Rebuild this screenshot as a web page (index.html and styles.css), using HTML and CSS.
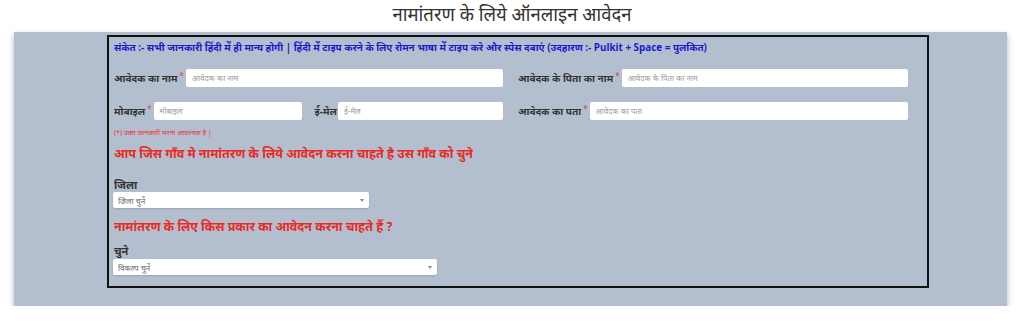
FILE: index.html
```html
<!DOCTYPE html>
<html lang="hi">
<head>
<meta charset="utf-8">
<link rel="stylesheet" href="styles.css">
</head>
<body>
<h1 class="title">नामांतरण के लिये ऑनलाइन आवेदन</h1>
<div class="panel">
  <div class="box">
    <p class="hint">संकेत :- सभी जानकारी हिंदी में ही मान्य होगी | हिंदी में टाइप करने के लिए रोमन भाषा में टाइप करे और स्पेस दबाएं (उदहारण :- <span class="latin">Pulkit + Space = </span>पुलकित)</p>
    <div class="grid">
      <div class="field">
        <span class="label">आवेदक का नाम</span><span class="star">*</span>
        <span class="input w-fill">आवेदक का नाम</span>
      </div>
      <div class="field">
        <span class="label">आवेदक के पिता का नाम</span><span class="star">*</span>
        <span class="input w-fill">आवेदक के पिता का नाम</span>
      </div>
      <div class="field">
        <span class="label">मोबाइल</span><span class="star">*</span>
        <span class="input w-mobile">मोबाइल</span>
        <span class="label email-label">ई-मेल</span>
        <span class="input w-fill">ई-मेल</span>
      </div>
      <div class="field">
        <span class="label">आवेदक का पता</span><span class="star">*</span>
        <span class="input w-fill">आवेदक का पता</span>
      </div>
    </div>
    <p class="note">(*) उक्त जानकारी भरना आवश्यक है |</p>
    <h2 class="heading">आप जिस गाँव मे नामांतरण के लिये आवेदन करना चाहते है उस गाँव को चुने</h2>
    <div class="sel-label">जिला</div>
    <div class="select sel-district"><span>जिला चुनें</span><span class="caret"></span></div>
    <h2 class="heading heading2">नामांतरण के लिए किस प्रकार का आवेदन करना चाहते हैं ?</h2>
    <div class="sel-label">चुने</div>
    <div class="select sel-type"><span>विकल्प चुनें</span><span class="caret"></span></div>
  </div>
</div>
</body>
</html>
```

FILE: styles.css
```css
html, body {
  margin: 0;
  padding: 0;
  background: #ffffff;
  font-family: "Noto Sans", "Noto Sans Devanagari", "Lohit Devanagari", "DejaVu Sans", sans-serif;
}

.title {
  margin: 0;
  height: 32px;
  line-height: 28px;
  text-align: center;
  font-size: 18.5px;
  font-weight: 400;
  color: #333333;
}

.panel {
  margin: 0 17px 0 14px;
  padding: 3px 0 18px;
  background: #b3bfcf;
  box-shadow: 0 3px 6px rgba(0, 0, 0, 0.3);
}

.box {
  width: 806px;
  margin: 0 auto 0 93px;
  border: 2px solid #111111;
  padding: 3px 7px 2px 5px;
  box-sizing: content-box;
}

.hint {
  margin: 0;
  height: 14px;
  line-height: 14px;
  font-size: 9.9px;
  font-weight: 700;
  color: #1a1acc;
  white-space: nowrap;
}

.latin {
  font-family: "Open Sans", "Noto Sans", sans-serif;
}

.grid {
  display: grid;
  grid-template-columns: 389px 390px;
  column-gap: 15px;
  row-gap: 15px;
  margin-top: 15px;
}

.field {
  display: flex;
  align-items: center;
  height: 18px;
}

.label {
  font-size: 10px;
  font-weight: 700;
  color: #333333;
  white-space: nowrap;
}

.star {
  color: #e33;
  font-size: 8px;
  margin: 0 2px 0 2px;
  align-self: flex-start;
  line-height: 14px;
}

.input {
  height: 18px;
  line-height: 18px;
  background: #ffffff;
  border-radius: 2px;
  padding-left: 6px;
  box-sizing: border-box;
  font-size: 8px;
  color: #999999;
  white-space: nowrap;
  overflow: hidden;
}

.w-fill {
  flex: 1;
}

.w-mobile {
  width: 148px;
  flex: none;
}

.email-label {
  margin-left: 13px;
  margin-right: 1px;
}

.note {
  margin: 8px 0 0;
  height: 9px;
  line-height: 9px;
  font-size: 7px;
  color: #e33;
}

.heading {
  margin: 7px 0 0;
  height: 20px;
  line-height: 20px;
  font-size: 12.5px;
  font-weight: 700;
  color: #e82b25;
  white-space: nowrap;
}

.heading2 {
  margin-top: 9px;
}

.sel-label {
  margin-top: 12px;
  height: 16px;
  line-height: 18px;
  font-size: 11px;
  font-weight: 700;
  color: #333333;
}

.heading2 + .sel-label {
  margin-top: 5px;
  height: 17px;
}

.select {
  display: flex;
  align-items: center;
  justify-content: space-between;
  height: 16px;
  background: #ffffff;
  border-radius: 2px;
  box-shadow: 0 1px 2px rgba(0, 0, 0, 0.15);
  padding: 0 5px;
  box-sizing: border-box;
  font-size: 8px;
  color: #666666;
  margin-left: -1px;
}

.sel-district {
  width: 256px;
}

.sel-type {
  width: 324px;
  margin-bottom: 9px;
}

.caret {
  width: 0;
  height: 0;
  border-left: 2px solid transparent;
  border-right: 2px solid transparent;
  border-top: 3px solid #888888;
}
```
